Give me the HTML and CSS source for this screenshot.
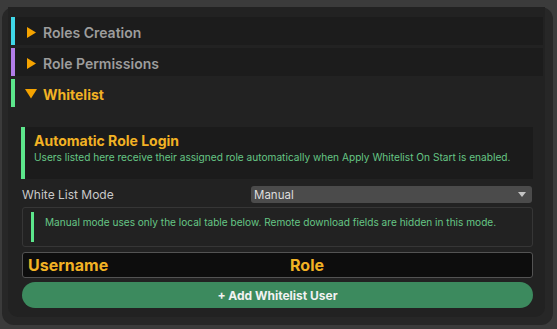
FILE: index.html
```html
<!DOCTYPE html>
<html lang="en">
<head>
    <meta charset="UTF-8">
    <title>Whitelist</title>
    <link rel="stylesheet" href="styles.css">
</head>
<body>
<div class="panel">
  <div class="panel__inner">

    <div class="foldout foldout--cyan">
      <svg class="foldout__arrow" width="10" height="11" viewBox="0 0 10 11"><polygon points="0,0 9,5.5 0,11" fill="#f5a300"/></svg>
      <span class="foldout__title">Roles Creation</span>
    </div>
    <div class="foldout foldout--purple">
      <svg class="foldout__arrow" width="10" height="11" viewBox="0 0 10 11"><polygon points="0,0 9,5.5 0,11" fill="#f5a300"/></svg>
      <span class="foldout__title">Role Permissions</span>
    </div>
    <div class="foldout foldout--green foldout--open">
      <svg class="foldout__arrow" width="13" height="10" viewBox="0 0 13 10"><polygon points="0,0 12,0 6,9.5" fill="#f5a300"/></svg>
      <span class="foldout__title">Whitelist</span>
    </div>

    <div class="section">
      <div class="info">
        <div class="info__title">Automatic Role Login</div>
        <div class="info__text">Users listed here receive their assigned role automatically when Apply Whitelist On Start is enabled.</div>
      </div>

      <div class="field">
        <span class="field__label">White List Mode</span>
        <div class="dropdown">
          <span>Manual</span>
          <svg width="8" height="5" viewBox="0 0 8 5"><polygon points="0,0 8,0 4,5" fill="#c4c4c4"/></svg>
        </div>
      </div>

      <div class="note">
        <div class="note__bar">Manual mode uses only the local table below. Remote download fields are hidden in this mode.</div>
      </div>

      <div class="table-head">
        <span class="table-head__col">Username</span>
        <span class="table-head__col">Role</span>
      </div>

      <button class="add-btn">+ Add Whitelist User</button>
    </div>

  </div>
</div>
</body>
</html>
```

FILE: styles.css
```css
html, body {
  margin: 0;
  height: 100%;
}

body {
  background: #3b3b3b;
  font-family: Inter, "Noto Sans", sans-serif;
  overflow: hidden;
}

.panel {
  margin: 7px 4px 0 2px;
  height: 318px;
  box-sizing: border-box;
  background: #272727;
  border-radius: 12px;
  padding: 0 8px 8px 6px;
}

.panel__inner {
  height: 100%;
  box-sizing: border-box;
  background: #222;
  border-radius: 0 0 10px 10px;
  padding: 10px 2px 0 3px;
}

.foldout {
  display: flex;
  align-items: center;
  height: 28px;
  margin-bottom: 3px;
  background: #1c1c1c;
  border-left: 4px solid #3fd7e8;
  box-sizing: border-box;
  padding-top: 2px;
}
.foldout--purple { border-left-color: #b27de9; }
.foldout--green { border-left-color: #5ce68b; background: #222; }

.foldout__arrow {
  margin-left: 7px;
  width: 20px;
}
.foldout--open .foldout__arrow {
  margin-left: 6px;
  width: 21px;
}

.foldout__title {
  margin-left: 1px;
  font-size: 14px;
  font-weight: 600;
  color: #9d9d9d;
}
.foldout--open .foldout__title {
  color: #f2b224;
  font-weight: 700;
}

.section {
  padding: 17px 10px 0 10px;
}

.info {
  background: #1b1b1b;
  border-left: 4px solid #5ce68b;
  height: 52px;
  box-sizing: border-box;
  padding: 5px 0 0 9px;
}

.info__title {
  font-size: 14px;
  line-height: 17px;
  font-weight: 700;
  color: #f2b224;
}

.info__text {
  margin-top: 2px;
  font-size: 10.15px;
  color: #66c685;
  white-space: nowrap;
}

.field {
  display: flex;
  align-items: center;
  height: 17px;
  margin: 7px 1px 0 1px;
}

.field__label {
  width: 229px;
  font-size: 12px;
  color: #c9c9c9;
}

.dropdown {
  flex: 1;
  height: 17px;
  display: flex;
  align-items: center;
  justify-content: space-between;
  background: #4b4b4b;
  border-radius: 3px;
  padding: 0 6px 0 3px;
  font-size: 11.5px;
  color: #dedede;
}

.note {
  margin: 4px 0 0 1px;
  border: 1px solid #363636;
  border-radius: 3px;
  padding: 4px 8px;
}

.note__bar {
  height: 30px;
  box-sizing: border-box;
  border-left: 3px solid #5ce68b;
  padding: 4px 0 0 11px;
  font-size: 10.1px;
  color: #66c685;
  white-space: nowrap;
}

.table-head {
  display: grid;
  grid-template-columns: 262px 1fr;
  margin: 5px 0 0 1px;
  height: 26px;
  box-sizing: border-box;
  background: #0d0d0d;
  border: 1px solid #535353;
  border-radius: 3px;
  padding: 0 0 0 5px;
  align-items: center;
}

.table-head__col {
  font-size: 16px;
  font-weight: 700;
  color: #f2b224;
}

.add-btn {
  display: block;
  width: calc(100% - 1px);
  margin: 4px 0 0 1px;
  height: 26px;
  border: none;
  border-radius: 13px;
  background: #3c8a5e;
  color: #f2f2f2;
  font-family: Inter, "Noto Sans", sans-serif;
  font-size: 12px;
  font-weight: 700;
}
```
